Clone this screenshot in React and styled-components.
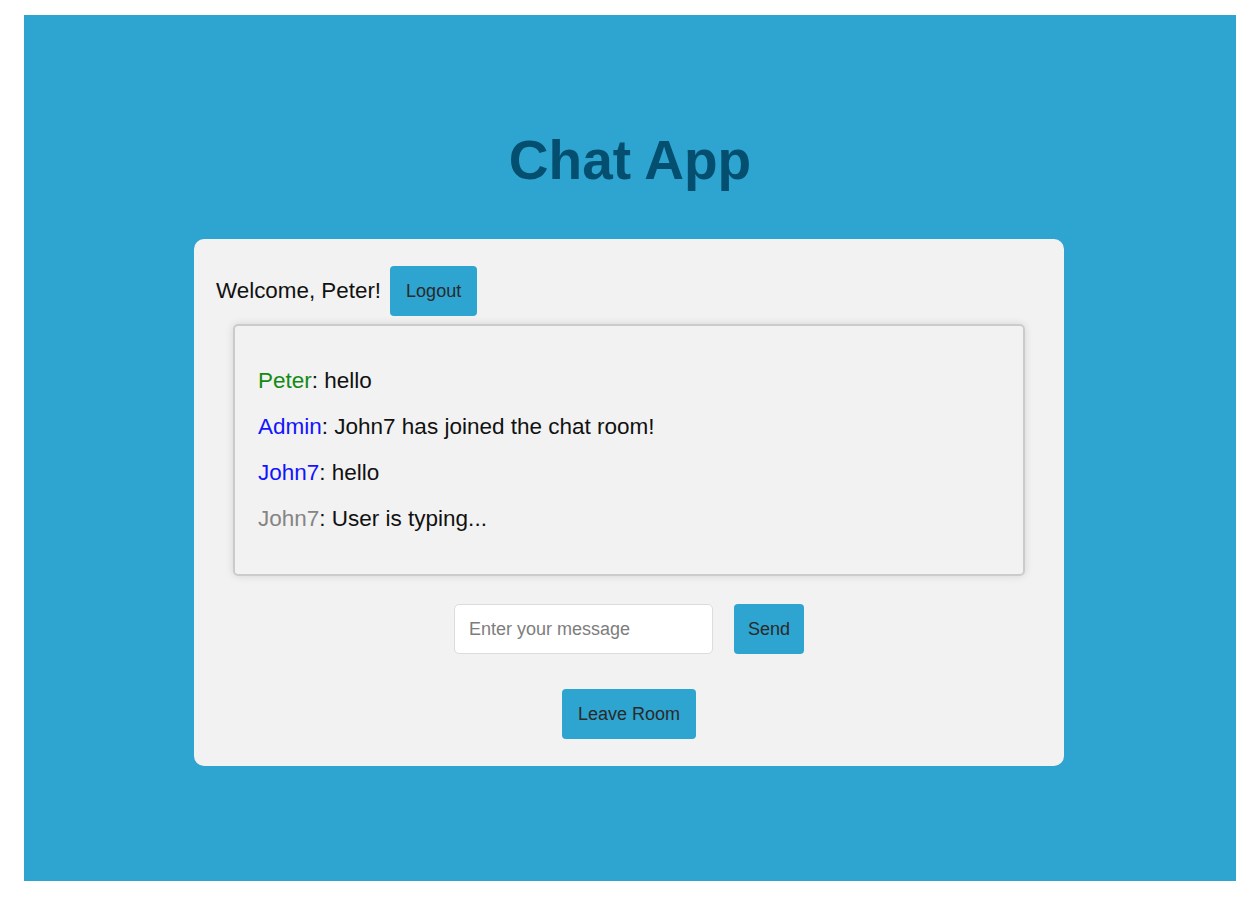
import React from 'react';
import styled, { createGlobalStyle } from 'styled-components';

const GlobalStyle = createGlobalStyle`
  html, body {
    margin: 0;
    padding: 0;
    background: #ffffff;
    font-family: 'Liberation Sans', Arial, sans-serif;
  }
`;

const messages = [
  { user: 'Peter', text: 'hello', color: '#148a14' },
  { user: 'Admin', text: 'John7 has joined the chat room!', color: '#1414ff' },
  { user: 'John7', text: 'hello', color: '#1414ff' },
  { user: 'John7', text: 'User is typing...', color: '#858585' },
];

const App = () => {
  return (
    <>
      <GlobalStyle />
      <Page>
        <Panel>
          <Title>Chat App</Title>
          <Card>
            <WelcomeRow>
              <Welcome>Welcome, Peter!</Welcome>
              <Button>Logout</Button>
            </WelcomeRow>
            <MessageBox>
              {messages.map((m, i) => (
                <Message key={i}>
                  <Name color={m.color}>{m.user}</Name>: {m.text}
                </Message>
              ))}
            </MessageBox>
            <InputRow>
              <Input placeholder="Enter your message" />
              <Button narrow>Send</Button>
            </InputRow>
            <LeaveRow>
              <Button>Leave Room</Button>
            </LeaveRow>
          </Card>
        </Panel>
      </Page>
    </>
  );
};

export default App;

/* Styled Components */

const Page = styled.div`
  padding: 15px 22px 17px 24px;
`;

const Panel = styled.div`
  height: 866px;
  background: #2ea4d0;
  display: flex;
  flex-direction: column;
  align-items: center;
  padding-top: 118px;
  box-sizing: border-box;
`;

const Title = styled.h1`
  margin: 0 0 52px;
  font-size: 55px;
  line-height: 54px;
  font-weight: 700;
  color: #044f70;
`;

const Card = styled.div`
  width: 870px;
  margin-right: 2px;
  box-sizing: border-box;
  background: #f2f2f2;
  border-radius: 10px;
  padding: 27px 22px 27px;
`;

const WelcomeRow = styled.div`
  display: flex;
  align-items: center;
  gap: 9px;
`;

const Welcome = styled.span`
  font-size: 22.4px;
  color: #111;
`;

const Button = styled.button`
  height: 50px;
  padding: 0 ${(p) => (p.narrow ? 14 : 16)}px;
  border: none;
  border-radius: 4px;
  background: #2ea4d0;
  color: #2a2a2a;
  font-family: 'Liberation Sans', Arial, sans-serif;
  font-size: 18px;
  cursor: pointer;
`;

const MessageBox = styled.div`
  margin: 8px 17px 0;
  padding: 32px 23px;
  border: 2px solid #cbcbcb;
  border-radius: 5px;
  box-shadow: 0 0 8px rgba(0, 0, 0, 0.12);
`;

const Message = styled.div`
  height: 46px;
  line-height: 46px;
  font-size: 22.5px;
  color: #111;
`;

const Name = styled.span`
  color: ${(p) => p.color};
`;

const InputRow = styled.div`
  display: flex;
  justify-content: center;
  gap: 21px;
  margin-top: 28px;
`;

const Input = styled.input`
  width: 259px;
  height: 50px;
  box-sizing: border-box;
  padding: 0 14px;
  border: 1px solid #dcdcdc;
  border-radius: 5px;
  background: #fff;
  font-family: 'Liberation Sans', Arial, sans-serif;
  font-size: 18px;

  &::placeholder {
    color: #7d7d7d;
  }
`;

const LeaveRow = styled.div`
  display: flex;
  justify-content: center;
  margin-top: 35px;
`;
